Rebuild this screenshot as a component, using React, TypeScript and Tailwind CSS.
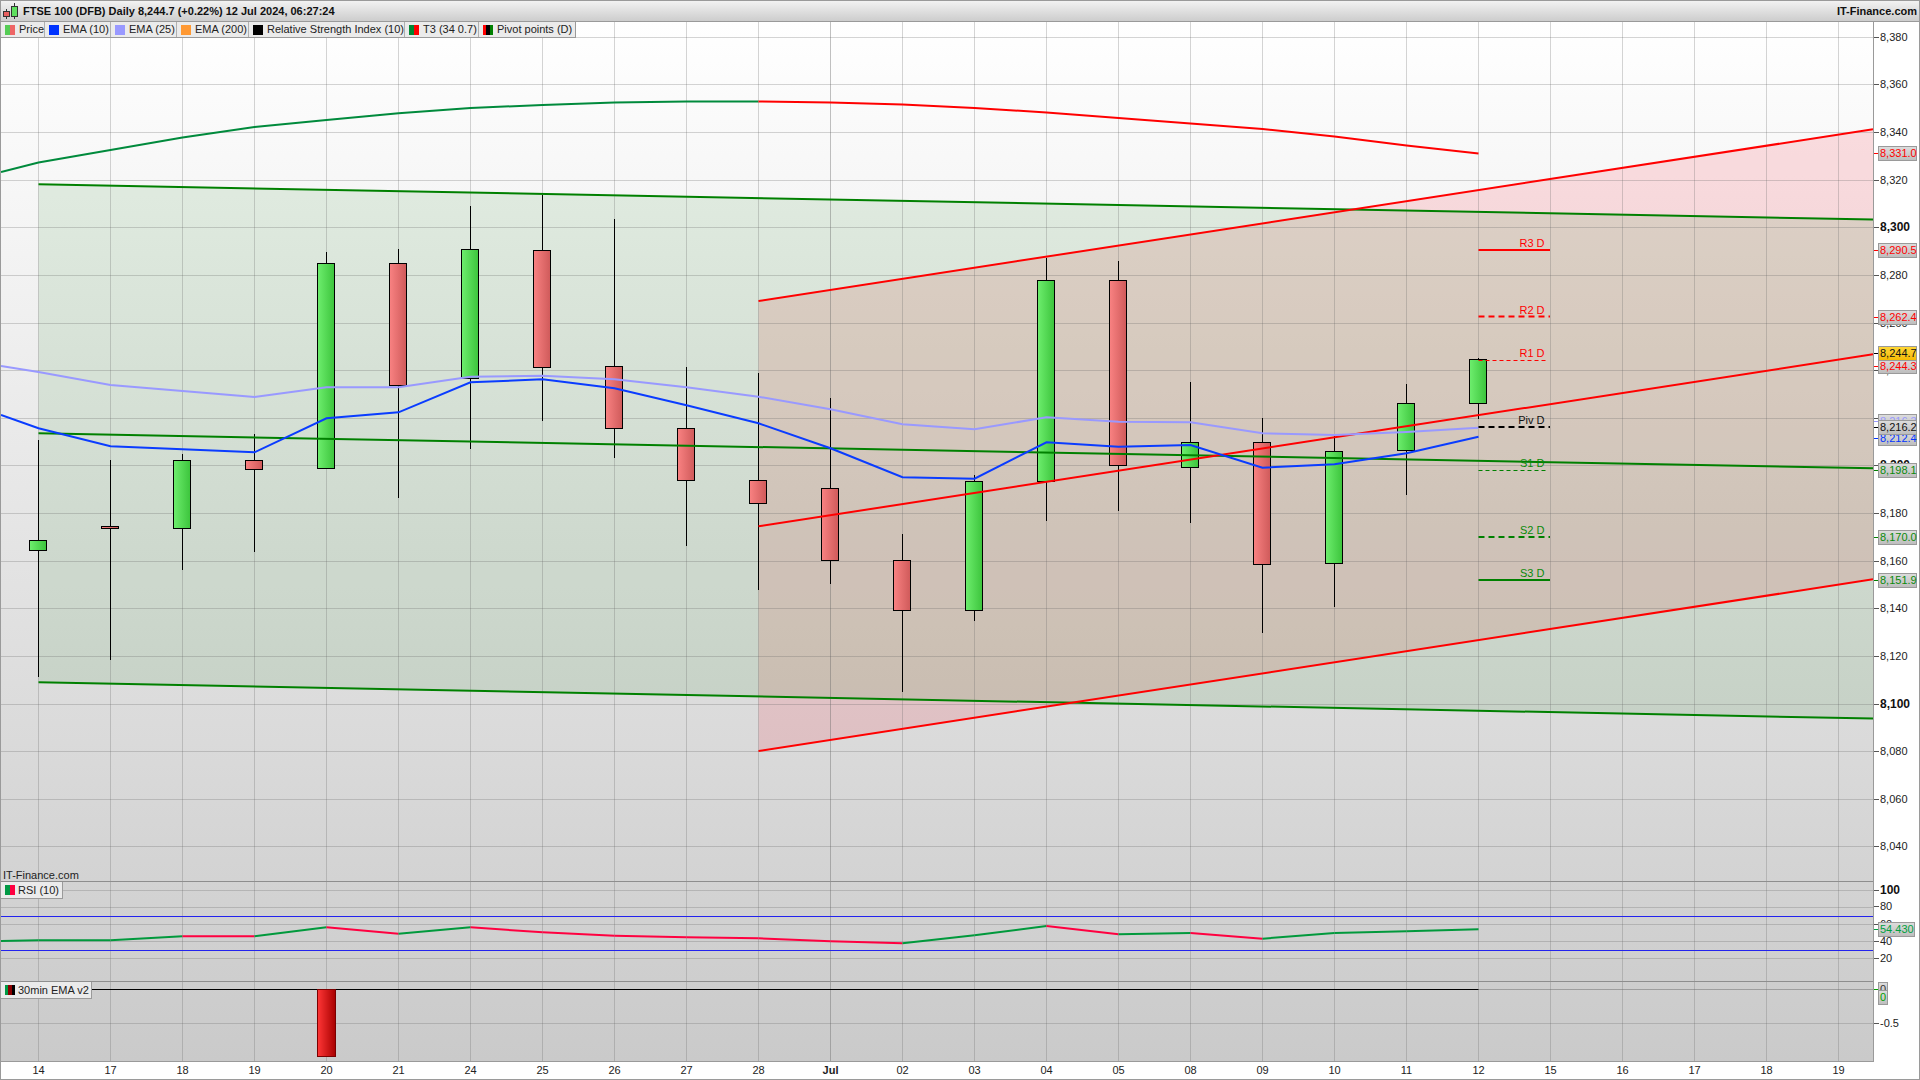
import React from "react";

// FTSE 100 daily candle chart. Everything in the plot is in screen pixels (viewBox below).
const X0 = 38.5;
const STEP = 72;
const xAt = (i: number) => X0 + i * STEP;
const pts = (ys: number[], first?: number) =>
  (first !== undefined ? `1,${first} ` : "") + ys.map((y, i) => `${xAt(i)},${y}`).join(" ");

// [wickTop, wickBottom, bodyTop, bodyBottom, up]
const CANDLES: [number, number, number, number, boolean][] = [
  [440, 677, 540, 550, true],
  [460, 660, 526, 528, false],
  [454, 570, 460, 528, true],
  [434, 552, 460, 469, false],
  [252, 468, 263, 468, true],
  [249, 498, 263, 385, false],
  [206, 449, 249, 378, true],
  [195, 421, 250, 367, false],
  [219, 458, 366, 428, false],
  [367, 546, 428, 480, false],
  [373, 590, 480, 503, false],
  [398, 584, 488, 560, false],
  [534, 692, 560, 610, false],
  [475, 621, 481, 610, true],
  [258, 521, 280, 481, true],
  [261, 511, 280, 465, false],
  [382, 523, 442, 467, true],
  [418, 633, 442, 564, false],
  [436, 607, 451, 563, true],
  [384, 495, 403, 450, true],
  [358, 419, 359, 403, true],
];

const EMA10 = [428.3, 446.3, 449.3, 452.3, 418.3, 412.3, 382.3, 379.3, 388.3, 405.3, 423.3, 448.3, 477.3, 478.7, 442.3, 446.7, 445, 467.7, 464.3, 453.3, 436.7];
const EMA25 = [372, 385, 391, 397, 387.3, 387.3, 376.7, 375.7, 379.3, 387.3, 396.7, 409.3, 424.3, 429.3, 417.3, 421.7, 422.3, 433.3, 435, 432, 427.7];
const T3_UP = "1,172 38.5,162.5 110.5,150 182.5,137.5 254.5,127 326.5,120 398.5,113.3 470.5,108 542.5,105 614.5,102.5 686.5,101.5 758.5,101.5";
const T3_DOWN = "758.5,101.5 830.5,102.5 902.5,104.5 974.5,108 1046.5,112.5 1118.5,118 1190.5,123.5 1262.5,129 1334.5,136.5 1406.5,145.5 1478.5,153.5";

const RSI = [940.3, 940.3, 936.3, 936.3, 927.3, 933.7, 927.3, 932.3, 935.7, 937.3, 938.3, 941.3, 943.3, 935.3, 926, 934.3, 933, 938.7, 933, 931.3, 929.3];

const H_GRID = [37, 84, 132, 180, 227, 275, 323, 370, 418, 465, 513, 561, 608, 656, 704, 751, 799, 846, 890, 907, 924, 941, 958, 1023];
const DATES = ["14", "17", "18", "19", "20", "21", "24", "25", "26", "27", "28", "Jul", "02", "03", "04", "05", "08", "09", "10", "11", "12", "15", "16", "17", "18", "19"];

const PIVOTS = [
  { label: "R3 D", y: 250, base: 247, c: "#ff0000", w: 2, dash: "", end: 1550, text: "fill-[#ff0000]" },
  { label: "R2 D", y: 316.5, base: 314, c: "#ff0000", w: 2, dash: "6 4", end: 1550, text: "fill-[#ff0000]" },
  { label: "R1 D", y: 360.5, base: 357, c: "#ff0000", w: 1, dash: "4 3", end: 1546, text: "fill-[#ff0000]" },
  { label: "Piv D", y: 427, base: 424, c: "#000000", w: 2, dash: "6 4", end: 1550, text: "fill-[#111111]" },
  { label: "S1 D", y: 470.5, base: 467, c: "#008000", w: 1, dash: "4 3", end: 1546, text: "fill-[#0a8a0a]" },
  { label: "S2 D", y: 537, base: 534, c: "#008000", w: 2, dash: "6 4", end: 1550, text: "fill-[#0a8a0a]" },
  { label: "S3 D", y: 580, base: 577, c: "#008000", w: 2, dash: "", end: 1550, text: "fill-[#0a8a0a]" },
];

const TICKS: [string, number, boolean?][] = [
  ["8,380", 37], ["8,360", 84], ["8,340", 132], ["8,320", 180], ["8,300", 227, true], ["8,280", 275],
  ["8,260", 323], ["8,240", 370], ["8,220", 418], ["8,200", 465, true], ["8,180", 513], ["8,160", 561],
  ["8,140", 608], ["8,120", 656], ["8,100", 704, true], ["8,080", 751], ["8,060", 799], ["8,040", 846],
  ["100", 890, true], ["80", 906], ["60", 924], ["40", 941], ["20", 958], ["-0.5", 1023],
];

const BOXES: { v: string; y: number; text: string; tick: string; bg?: string; w?: string }[] = [
  { v: "8,331.0", y: 153.5, text: "text-[#ff0000]", tick: "bg-[#ff0000]" },
  { v: "8,290.5", y: 250, text: "text-[#ff0000]", tick: "bg-[#ff0000]" },
  { v: "8,262.4", y: 317, text: "text-[#ff0000]", tick: "bg-[#ff0000]" },
  { v: "8,244.3", y: 366, text: "text-[#ff0000]", tick: "bg-[#ff0000]" },
  { v: "8,244.7", y: 353, text: "text-[#111111]", tick: "bg-[#000000]", bg: "from-[#ffd633] to-[#f5bb00]" },
  { v: "8,216.3", y: 421, text: "text-[#9999ff]", tick: "bg-[#9999ff]" },
  { v: "8,212.4", y: 438, text: "text-[#0033ff]", tick: "bg-[#0033ff]" },
  { v: "8,216.2", y: 427, text: "text-[#111111]", tick: "bg-[#000000]" },
  { v: "8,198.1", y: 470.5, text: "text-[#0a8a0a]", tick: "bg-[#008000]" },
  { v: "8,170.0", y: 537, text: "text-[#0a8a0a]", tick: "bg-[#008000]" },
  { v: "8,151.9", y: 580, text: "text-[#0a8a0a]", tick: "bg-[#008000]" },
  { v: "54.430", y: 929, text: "text-[#00a040]", tick: "bg-[#00a040]", w: "w-[37px]" },
  { v: "0", y: 989, text: "text-[#333333]", tick: "bg-[#00a000]", w: "w-[10px]" },
  { v: "0", y: 997, text: "text-[#00a000]", tick: "bg-transparent", w: "w-[10px]" },
];

const LEGEND: { name: string; w: string; sw: string[] }[] = [
  { name: "Price", w: "w-[44px]", sw: ["bg-[#55cc55]", "bg-[#ee6666]"] },
  { name: "EMA (10)", w: "w-[66px]", sw: ["bg-[#0033ff]"] },
  { name: "EMA (25)", w: "w-[66px]", sw: ["bg-[#9999ff]"] },
  { name: "EMA (200)", w: "w-[72px]", sw: ["bg-[#ff9933]"] },
  { name: "Relative Strength Index (10)", w: "w-[156px]", sw: ["bg-[#000000]"] },
  { name: "T3 (34 0.7)", w: "w-[74px]", sw: ["bg-[#008833]", "bg-[#ff0000]"] },
  { name: "Pivot points (D)", w: "w-[96px]", sw: ["bg-[#ff0000]", "bg-[#000000]", "bg-[#008000]"] },
];

function Swatch({ colors }: { colors: string[] }) {
  return (
    <span className="flex h-[10px] w-[10px] shrink-0">
      {colors.map((c, i) => <span key={i} className={`flex-1 ${c}`} />)}
    </span>
  );
}

function PlotSvg() {
  const rsiColors = ["up", "up", "up", "dn", "up", "dn", "up", "dn", "dn", "dn", "dn", "dn", "dn", "up", "up", "dn", "up", "dn", "up", "up", "up"];
  return (
    <svg width={1872} height={1039} viewBox="1 22 1872 1039" className="block">
      <defs>
        <linearGradient id="up"><stop offset="0" stopColor="#6eee6e" /><stop offset="1" stopColor="#3cc43c" /></linearGradient>
        <linearGradient id="dn"><stop offset="0" stopColor="#f98282" /><stop offset="1" stopColor="#cf5a5a" /></linearGradient>
        <linearGradient id="bar"><stop offset="0" stopColor="#ff3636" /><stop offset="1" stopColor="#a80000" /></linearGradient>
      </defs>

      {/* T3 channel fills sit under the grid; third polygon warms the overlap to the tan of the original */}
      <polygon points="38.5,184.3 1873,219.5 1873,718.5 38.5,682.3" fill="#168416" fillOpacity={0.1} />
      <polygon points="758.5,301 1873,129.3 1873,579.3 758.5,751" fill="#ff0c25" fillOpacity={0.12} />
      <polygon points="758.5,301 1352.4,209.5 1873,219.5 1873,579.3 1072.1,702.7 758.5,696.5" fill="#a8e8b0" fillOpacity={0.09} />

      {H_GRID.map((y) => <line key={y} x1={1} x2={1873} y1={y + 0.5} y2={y + 0.5} stroke="#646464" strokeOpacity={0.27} />)}
      {Array.from({ length: 26 }, (_, i) => (
        <line key={i} x1={xAt(i)} x2={xAt(i)} y1={22} y2={1061} stroke="#646464" strokeOpacity={i === 11 ? 0.4 : 0.27} />
      ))}
      <line x1={1} x2={1873} y1={881.5} y2={881.5} stroke="#8e8e8e" />
      <line x1={1} x2={1873} y1={981.5} y2={981.5} stroke="#8e8e8e" />
      <line x1={1478.5} x2={1873} y1={989.5} y2={989.5} stroke="#646464" strokeOpacity={0.45} />

      {CANDLES.map(([wt, wb, bt, bb, up], i) => (
        <g key={i}>
          <line x1={xAt(i)} x2={xAt(i)} y1={wt} y2={wb} stroke="#000" />
          <rect x={xAt(i) - 9} y={bt + 0.5} width={17} height={bb - bt} fill={`url(#${up ? "up" : "dn"})`} stroke="#000" />
        </g>
      ))}

      <polyline points={T3_UP} fill="none" stroke="#008a3c" strokeWidth={2} />
      <polyline points={T3_DOWN} fill="none" stroke="#ff0000" strokeWidth={2} />
      <line x1={38.5} y1={184.3} x2={1873} y2={219.5} stroke="#008000" strokeWidth={2} />
      <line x1={38.5} y1={433.3} x2={1873} y2={468.3} stroke="#008000" strokeWidth={2} />
      <line x1={38.5} y1={682.3} x2={1873} y2={718.5} stroke="#008000" strokeWidth={2} />
      <line x1={758.5} y1={301} x2={1873} y2={129.3} stroke="#ff0000" strokeWidth={2} />
      <line x1={758.5} y1={526.3} x2={1873} y2={354.3} stroke="#ff0000" strokeWidth={2} />
      <line x1={758.5} y1={751} x2={1873} y2={579.3} stroke="#ff0000" strokeWidth={2} />

      <polyline points={pts(EMA25, 366)} fill="none" stroke="#9999ff" strokeWidth={2} />
      <polyline points={pts(EMA10, 415)} fill="none" stroke="#0a3cff" strokeWidth={2} />

      {PIVOTS.map((p) => (
        <g key={p.label}>
          <line x1={1478.5} x2={p.end} y1={p.y} y2={p.y} stroke={p.c} strokeWidth={p.w} strokeDasharray={p.dash || undefined} />
          <text x={1544.5} y={p.base} textAnchor="end" className={`text-[11px] ${p.text}`}>{p.label}</text>
        </g>
      ))}

      {/* RSI pane */}
      <line x1={1} x2={1873} y1={916.5} y2={916.5} stroke="#2222ee" />
      <line x1={1} x2={1873} y1={950.5} y2={950.5} stroke="#2222ee" />
      <line x1={1} y1={941} x2={38.5} y2={940.3} stroke="#00993c" strokeWidth={2} />
      {RSI.slice(1).map((y, i) => (
        <line key={i} x1={xAt(i)} y1={RSI[i]} x2={xAt(i + 1)} y2={y} strokeWidth={2} stroke={rsiColors[i + 1] === "up" ? "#00993c" : "#ff0040"} />
      ))}

      {/* 30min EMA pane */}
      <line x1={1} x2={1478.5} y1={989.5} y2={989.5} stroke="#000" />
      <rect x={317.5} y={989.5} width={18} height={67} fill="url(#bar)" stroke="#7a0000" />
    </svg>
  );
}

export default function App() {
  return (
    <div className="w-[1920px] h-[1080px] flex flex-col border border-[#9a9a9a] bg-white overflow-hidden font-['Liberation_Sans',sans-serif] text-[#222222]">
      {/* title bar */}
      <div className="h-[21px] shrink-0 flex items-center justify-between pl-[2px] pr-[2px] border-b border-[#9a9a9a] bg-gradient-to-b from-[#f2f2f2] to-[#cdcdcd]">
        <div className="flex items-center gap-[5px]">
          <svg width={15} height={16} viewBox="0 0 15 16" className="shrink-0">
            <line x1={3.5} x2={3.5} y1={6} y2={16} stroke="#333" />
            <rect x={0.5} y={8.5} width={6} height={5} fill="#e86060" stroke="#333" />
            <line x1={11.5} x2={11.5} y1={0} y2={16} stroke="#333" />
            <rect x={8.5} y={3.5} width={6} height={10} fill="#5fe05f" stroke="#333" />
          </svg>
          <span className="font-bold text-[11px] text-[#111111]">FTSE 100 (DFB) Daily 8,244.7 (+0.22%) 12 Jul 2024, 06:27:24</span>
        </div>
        <span className="font-bold text-[11px] text-[#111111]">IT-Finance.com</span>
      </div>

      <div className="flex h-[1040px] shrink-0">
        <div className="relative w-[1873px] h-[1040px] border-r border-b border-[#9a9a9a] bg-gradient-to-b from-white to-[#cacaca]">
          <PlotSvg />

          {/* legend strip over the plot */}
          <div className="absolute left-0 top-0 flex h-[16px] border-b border-r border-[#9a9a9a] bg-[#ebebeb] text-[11px]">
            {LEGEND.map((l) => (
              <div key={l.name} className={`flex items-center gap-[4px] pl-[4px] border-r border-[#b0b0b0] last:border-r-0 whitespace-nowrap ${l.w}`}>
                <Swatch colors={l.sw} />
                <span>{l.name}</span>
              </div>
            ))}
          </div>

          <div className="absolute left-[2px] top-[846px] text-[11px] leading-[14px]">IT-Finance.com</div>

          <div className="absolute left-0 top-[860px] w-[62px] h-[17px] flex items-center gap-[3px] pl-[4px] bg-[#ebebeb] border-r border-b border-[#9a9a9a] text-[11px]">
            <Swatch colors={["bg-[#009944]", "bg-[#ff0040]"]} />
            <span>RSI (10)</span>
          </div>
          <div className="absolute left-0 top-[960px] w-[91px] h-[17px] flex items-center gap-[3px] pl-[4px] bg-[#ebebeb] border-r border-b border-[#9a9a9a] text-[11px] whitespace-nowrap">
            <Swatch colors={["bg-[#009944]", "bg-[#8a0000]", "bg-[#000000]"]} />
            <span>30min EMA v2</span>
          </div>
        </div>

        {/* value axis */}
        <div className="relative w-[45px] text-[11px]">
          {TICKS.map(([t, y, bold]) => (
            <div key={t} className="absolute left-0 h-[14px] flex items-center" style={{ top: y - 22 - 7 }}>
              <span className="w-[5px] h-px bg-[#555555] mr-[1px]" />
              <span className={bold ? "font-bold text-[12px] text-[#111111]" : ""}>{t}</span>
            </div>
          ))}
          {BOXES.map((b, i) => (
            <div key={i} className="absolute left-0 h-[15px] flex items-center" style={{ top: b.y - 22 - 7.5 }}>
              <span className={`w-[4px] h-px ${b.tick}`} />
              <span className={`${b.w ?? "w-[39px]"} h-[15px] pl-[1px] border border-[#9a9a9a] bg-gradient-to-b ${b.bg ?? "from-[#dcdcdc] to-[#bebebe]"} leading-[13px] ${b.text}`}>{b.v}</span>
            </div>
          ))}
        </div>
      </div>

      {/* date axis */}
      <div className="flex h-[17px] shrink-0 items-center pl-[1.5px] text-[11px]">
        {DATES.map((d, i) => (
          <span key={i} className={`w-[72px] shrink-0 text-center ${d === "Jul" ? "font-bold" : ""}`}>{d}</span>
        ))}
      </div>
    </div>
  );
}
